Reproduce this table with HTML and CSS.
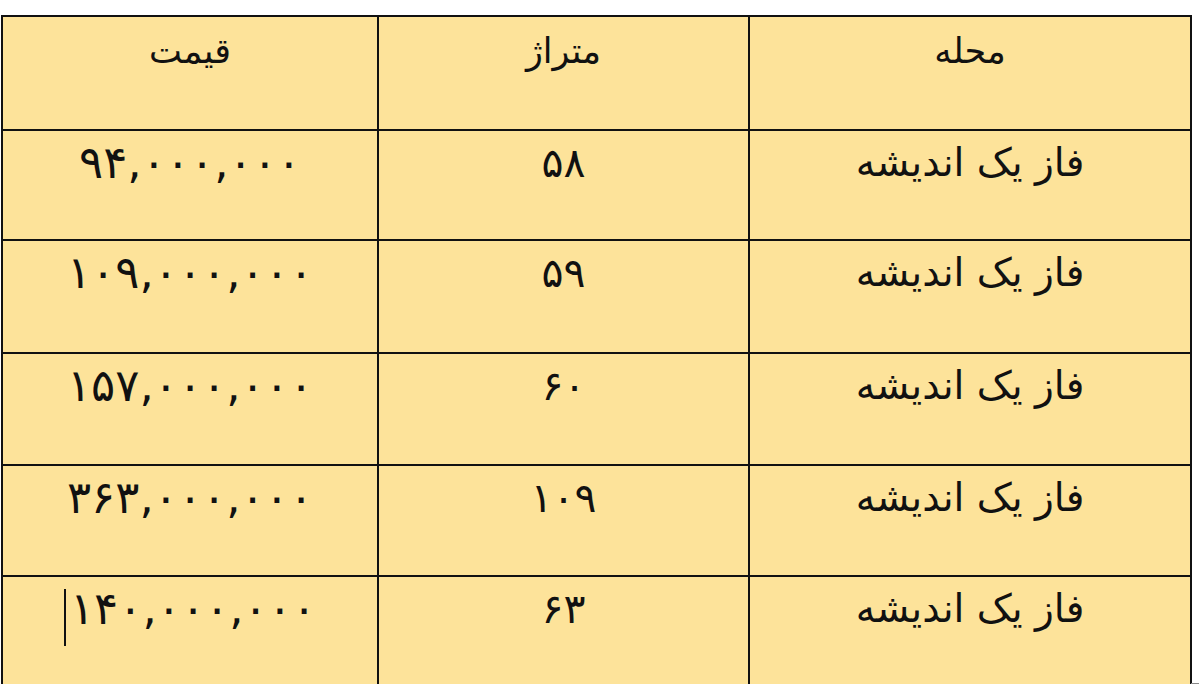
FILE: index.html
```html
<!DOCTYPE html>
<html lang="fa">
<head>
<meta charset="utf-8">
<link rel="stylesheet" href="styles.css">
</head>
<body>
<div class="page">
  <table class="grid" dir="rtl">
    <colgroup>
      <col class="c-area">
      <col class="c-size">
      <col class="c-price">
    </colgroup>
    <tr class="head">
      <td>محله</td>
      <td>متراژ</td>
      <td>قیمت</td>
    </tr>
    <tr class="r1">
      <td>فاز یک اندیشه</td>
      <td><span class="size">۵۸</span></td>
      <td><span class="num">۹۴,۰۰۰,۰۰۰</span></td>
    </tr>
    <tr class="r2">
      <td>فاز یک اندیشه</td>
      <td><span class="size">۵۹</span></td>
      <td><span class="num">۱۰۹,۰۰۰,۰۰۰</span></td>
    </tr>
    <tr class="r3">
      <td>فاز یک اندیشه</td>
      <td><span class="size">۶۰</span></td>
      <td><span class="num">۱۵۷,۰۰۰,۰۰۰</span></td>
    </tr>
    <tr class="r4">
      <td>فاز یک اندیشه</td>
      <td><span class="size">۱۰۹</span></td>
      <td><span class="num">۳۶۳,۰۰۰,۰۰۰</span></td>
    </tr>
    <tr class="r5">
      <td>فاز یک اندیشه</td>
      <td><span class="size">۶۳</span></td>
      <td><span class="num" dir="ltr"><span class="caret"></span>۱۴۰,۰۰۰,۰۰۰</span></td>
    </tr>
  </table>
  <span class="handle"></span>
</div>
</body>
</html>
```

FILE: styles.css
```css
html, body {
  margin: 0;
  padding: 0;
  background: #ffffff;
}

.page {
  position: relative;
  padding: 15px 0 0 1px;
  width: 1190px;
}

.grid {
  border-collapse: collapse;
  table-layout: fixed;
  width: 1189px;
  background: #fde39a;
  font-family: "DejaVu Sans", "Noto Sans", sans-serif;
  font-size: 39px;
  color: #111;
}

.c-area { width: 442px; }
.c-size { width: 371px; }
.c-price { width: 376px; }

.grid td {
  border: 2px solid #111;
  text-align: center;
  vertical-align: top;
  padding: 10px 0 0 0;
  line-height: 44px;
  overflow: visible;
  white-space: nowrap;
}

.head td {
  font-size: 35px;
  padding-top: 12px;
}

.grid tr:last-child td {
  border-bottom: none;
}

.head td { height: 100px; }
.r1 td { height: 98px; }
.r2 td { height: 101px; }
.r3 td { height: 100px; }
.r4 td { height: 99px; }
.r5 td { height: 97px; }

.num {
  display: inline-block;
  direction: ltr;
  font-size: 45px;
  line-height: 44px;
}

.size {
  display: inline-block;
  direction: ltr;
  font-size: 41px;
}

.caret {
  display: inline-block;
  width: 2px;
  height: 57px;
  background: #111;
  vertical-align: top;
  margin-top: 2px;
  margin-right: 4px;
}

.handle {
  position: absolute;
  left: 1191px;
  top: 683px;
  width: 7px;
  height: 7px;
  border-top: 1px solid #888;
  border-left: 1px solid #888;
}
```
